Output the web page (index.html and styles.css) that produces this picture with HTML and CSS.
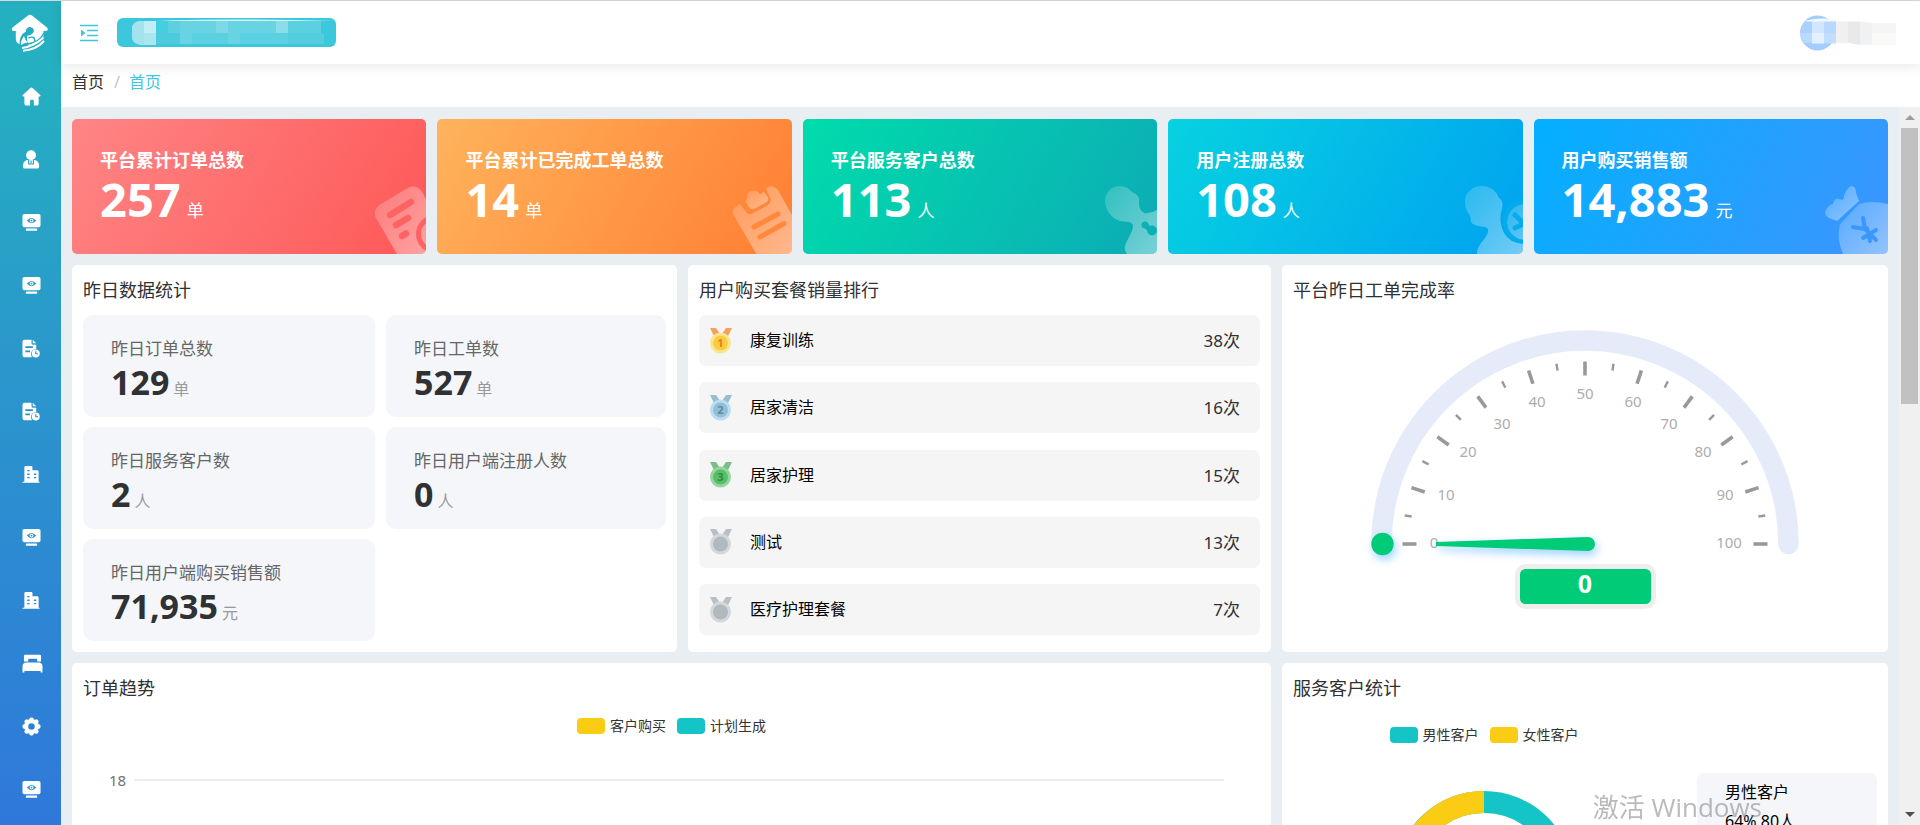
FILE: index.html
```html
<!DOCTYPE html>
<html lang="zh-CN">
<head>
<meta charset="utf-8">
<title>首页</title>
<link rel="stylesheet" href="styles.css">
</head>
<body>
<svg class="sprite" aria-hidden="true">
  <symbol id="i-home" viewBox="0 0 20 20"><path fill="#fff" d="M8.800 1q1.200-1 2.400 0l8 7.400q1 1.300-.7 1.600H17.500v7.500q0 2-2 2H12.500v-4.500q0-1.500-1.500-1.500h-1q-1.500 0-1.500 1.500v4.500H4.500q-2 0-2-2V10H1.500Q-.2 9.700.8 8.400z"/></symbol>
  <symbol id="i-user" viewBox="0 0 20 20"><circle cx="9.500" cy="5.500" r="5.200" fill="#fff"/><path fill="#fff" d="M5 10.500h9q4 1.500 4 6v1q0 2-2 2H3q-2 0-2-2v-1q0-4.500 4-6z"/><path d="M7 10.200v4.500h5v-4.500M9.500 11v3" fill="none" stroke="#289fc8" stroke-width="1.200"/></symbol>
  <symbol id="i-screen" viewBox="0 0 20 20"><rect x=".5" y="1" width="19" height="14" rx="2" fill="#fff"/><rect x="4" y="16.200" width="12" height="2.600" rx="1" fill="#fff"/><path d="M5 8q5-5.500 10 0q-5 5.500-10 0z" fill="#2a98cc"/><circle cx="10" cy="8" r="2" fill="#fff"/><circle cx="10" cy="8" r="1" fill="#2a98cc"/></symbol>
  <symbol id="i-file" viewBox="0 0 20 20"><path fill="#fff" d="M2.500.8H10v3.700q0 1.500 1.500 1.500H15v4.500q-5 .3-5.500 5 0 2 1 3.700h-8q-2 0-2-2V2.800q0-2 2-2zM11.300.8l3.700 3.700h-3.700z"/><path d="M3.500 8.500h8M3.500 13h5" stroke="#2994cc" stroke-width="1.700"/><circle cx="14.500" cy="15.200" r="4.200" fill="#fff"/><path d="M14.500 13v2.500h2.300" fill="none" stroke="#2994cc" stroke-width="1.200"/></symbol>
  <symbol id="i-building" viewBox="0 0 20 20"><path fill="#fff" d="M2.500 17.500V2.500q0-1.500 1.500-1.500h6q1 0 1 1v3.500h5q1.500 0 1.500 1.500v10.500h1v1.300H.5v-1.300z"/><path d="M5.500 6h2.500M5.500 9.700h2.500M5.500 13.300h2.500M12.500 9.700h2.500M12.500 13.300h2.500" stroke="#2c8bd0" stroke-width="1.400"/></symbol>
  <symbol id="i-bed" viewBox="0 0 22 20"><path fill="#fff" d="M2 8V2.200Q2 .8 3.400.8h15.200q1.400 0 1.400 1.400V8h-4V6q0-1-1-1H7.500q-1 0-1 1v2zM4 9h14q3.500.5 3.500 4v6.500h-2V18H2.500v1.500h-2V13Q.5 9.500 4 9z"/></symbol>
  <symbol id="i-gear" viewBox="0 0 20 20"><g fill="#fff"><circle cx="10" cy="10" r="7.800"/><rect x="7.700" y=".5" width="4.600" height="19" rx="1.800"/><rect x=".5" y="7.700" width="19" height="4.600" rx="1.800"/><rect x="7.700" y=".5" width="4.600" height="19" rx="1.800" transform="rotate(45 10 10)"/><rect x="7.700" y=".5" width="4.600" height="19" rx="1.800" transform="rotate(-45 10 10)"/></g><circle cx="10" cy="10" r="3.400" fill="#2e80d6"/></symbol>
</svg>

<div class="app">
  <nav class="sidebar" aria-label="主导航">
    <a class="logo" href="#" aria-label="首页">
      <svg width="38" height="38" viewBox="0 0 38 38"><path fill="#fff" d="M17 1.600q2-1.600 4 0L36 13.500q2 3-1 3.500h-2.500v5q-2 7-12 9L9 30.500Q5 29 4.800 25V17H2.500q-3-.5-1-3.500z"/><path fill="#25adc1" d="M8.500 31Q8 21 15 17.500a4 3.600 0 1 1 7 1.500Q19 22 16.500 21.500 15 26 18 30q-4 2-6 3.500z"/><path fill="#fff" d="M13 22q-3.500 5-3 9 3-2.500 7-2.500-3-2-4-6.500z"/><path fill="none" stroke="#25adc1" stroke-width="1.400" d="M17.500 24q3-1.500 5.500-.5l1 4.500M33 19q-5 10-17 11"/><path fill="none" stroke="#fff" stroke-width="1.900" d="M11 34Q24 32 32.500 23.500M12 36.700Q25 36 33 27"/></svg>
    </a>
    <a class="nav-item" href="#" aria-label="主页"><svg class="nav-icon"><use href="#i-home"/></svg></a>
    <a class="nav-item" href="#" aria-label="用户"><svg class="nav-icon"><use href="#i-user"/></svg></a>
    <a class="nav-item" href="#" aria-label="监控"><svg class="nav-icon"><use href="#i-screen"/></svg></a>
    <a class="nav-item" href="#" aria-label="监控"><svg class="nav-icon"><use href="#i-screen"/></svg></a>
    <a class="nav-item" href="#" aria-label="订单"><svg class="nav-icon"><use href="#i-file"/></svg></a>
    <a class="nav-item" href="#" aria-label="工单"><svg class="nav-icon"><use href="#i-file"/></svg></a>
    <a class="nav-item" href="#" aria-label="机构"><svg class="nav-icon"><use href="#i-building"/></svg></a>
    <a class="nav-item" href="#" aria-label="监控"><svg class="nav-icon"><use href="#i-screen"/></svg></a>
    <a class="nav-item" href="#" aria-label="机构"><svg class="nav-icon"><use href="#i-building"/></svg></a>
    <a class="nav-item" href="#" aria-label="床位"><svg class="nav-icon nav-icon-wide"><use href="#i-bed"/></svg></a>
    <a class="nav-item" href="#" aria-label="设置"><svg class="nav-icon"><use href="#i-gear"/></svg></a>
    <a class="nav-item" href="#" aria-label="监控"><svg class="nav-icon"><use href="#i-screen"/></svg></a>
  </nav>

  <div class="main">
    <header class="header">
      <button class="fold" type="button" aria-label="展开菜单">
        <svg width="18" height="18" viewBox="0 0 18 18"><path d="M0 1.500h18M7 6.500h11M7 11.500h11M0 16.500h18" stroke="#3cc8dc" stroke-width="1.600"/><path d="M1 5.500v7L5.500 9z" fill="#3cc8dc"/></svg>
      </button>
      <button class="org" type="button" aria-label="机构">
        <svg width="219" height="29" viewBox="0 0 219 29">
          <rect x="27" y="3" width="177" height="23" fill="#5ad0e0"/>
          <path d="M39 3q60-3 180 0z" fill="#d7f3f8"/>
          <path d="M15 8q3-5 8-5h4v24h-4q-8-2-8-7z" fill="#a4e3ee"/><rect x="27" y="3" width="12" height="12" fill="#c2eff6"/><rect x="27" y="15" width="12" height="12" fill="#abe5ef"/>
          <rect x="39" y="3" width="12" height="12" fill="#47cde0"/><rect x="39" y="15" width="24" height="11" fill="#4bcbdd"/>
          <g fill="#68d4e3"><rect x="63" y="3" width="36" height="12"/><rect x="63" y="15" width="12" height="11"/><rect x="111" y="3" width="48" height="12"/><rect x="111" y="15" width="12" height="11"/></g>
          <rect x="99" y="3" width="12" height="12" fill="#7bdae6"/><rect x="159" y="3" width="12" height="12" fill="#8adeea"/><rect x="171" y="15" width="36" height="11" fill="#53ccdd"/>
        </svg>
      </button>
      <button class="account" type="button" aria-label="账户">
        <svg width="98" height="36" viewBox="0 0 98 36">
          <circle cx="17.500" cy="18" r="17.500" fill="#a3cdff"/>
          <path d="M6 5.500Q22 2 36 5v2H6z" fill="#f3f8fd"/>
          <path d="M1 14q1-5 4-7.500h7V18H0z" fill="#abd2ff"/><path d="M0 18h12v10H4q-3-4-4-10z" fill="#b9daff"/>
          <rect x="12" y="6.500" width="12" height="11.500" fill="#d2e6ff"/><rect x="12" y="18" width="12" height="10.500" fill="#e5f0ff"/>
          <rect x="24" y="6.500" width="12" height="11.500" fill="#b7d8ff"/><rect x="24" y="18" width="12" height="10.500" fill="#c2deff"/>
          <rect x="36" y="6.500" width="12" height="21.500" fill="#f0f0f0"/><path d="M48 6.500h12V30l-12-2z" fill="#e9e9e9"/>
          <path d="M60 6.500l12 1.500v22H60z" fill="#f0f1f3"/><path d="M72 8h24v10H72z" fill="#f4f5f5"/><path d="M72 18h24v12H72z" fill="#f9f9f8"/>
        </svg>
      </button>
    </header>

    <nav class="crumbs" aria-label="面包屑">
      <a class="crumb" href="#">首页</a><span class="crumb-sep">/</span><a class="crumb crumb-on" href="#">首页</a>
    </nav>

    <div class="viewport">
      <main class="content">
        <section class="totals">
          <article class="total total-red">
            <h2 class="total-name">平台累计订单总数</h2>
            <p class="total-row"><strong class="total-num">257</strong> <span class="total-unit">单</span></p>
            <svg class="total-art" width="54" height="68" viewBox="0 0 54 68"><defs><linearGradient id="fade" x1="0" y1="0" x2="1" y2="1"><stop offset="0" stop-color="#fff" stop-opacity=".16"/><stop offset="1" stop-color="#fff" stop-opacity=".45"/></linearGradient></defs><path fill="url(#fade)" d="M3.500 31Q1 23 8 18.500L34 3q10-6 16 3l4 7v55H25z"/><g fill="none" stroke="#fd6363" stroke-linecap="round" stroke-width="6.500"><path d="M18 29l21-13M24 39l12-7M30 50l4-2.500"/><circle cx="63" cy="48" r="16.500" stroke-width="5"/></g></svg>
          </article>
          <article class="total total-orange">
            <h2 class="total-name">平台累计已完成工单总数</h2>
            <p class="total-row"><strong class="total-num">14</strong> <span class="total-unit">单</span></p>
            <svg class="total-art" width="60" height="68" viewBox="0 0 60 68"><path fill="url(#fade)" d="M1.500 29Q-.5 23 5 20l3-2 6 8q3 4 7 1l15-8q4-3 2-7l-4-10q7-4 12 2l14 25v40H25z"/><path fill="url(#fade)" d="M13.500 15.500l2-4Q14 6 20 5q6-1.500 8 3.500l4-3 4 6q1 3-2 5l-11 6q-4 2-6-1z"/><path d="M22 41l24-13M28 51l24-13.500" stroke="#ff883b" stroke-width="5" stroke-linecap="round"/></svg>
          </article>
          <article class="total total-green">
            <h2 class="total-name">平台服务客户总数</h2>
            <p class="total-row"><strong class="total-num">113</strong> <span class="total-unit">人</span></p>
            <svg class="total-art" width="54" height="68" viewBox="0 0 54 68"><path fill="url(#fade)" d="M2 15C2 6 9 0 17 0q7 0 12 6 8 3 7 10t5 11q6 1 13-3v44H24q-4-5-1-11l6-12q3-8-3-9l-9-1C10 33 2 25 2 15z"/><path d="M42 39l7 6" stroke="#0ab2b3" stroke-width="5"/><circle cx="42" cy="39" r="3.500" fill="#0ab2b3"/><circle cx="49" cy="44.500" r="5" fill="#0ab2b3"/></svg>
          </article>
          <article class="total total-cyan">
            <h2 class="total-name">用户注册总数</h2>
            <p class="total-row"><strong class="total-num">108</strong> <span class="total-unit">人</span></p>
            <svg class="total-art" width="58" height="68" viewBox="0 0 58 68"><path fill="url(#fade)" d="M0 15C0 6 8 0 17 0q12 0 17 12 5 3 3 10-4 14 2 25 7 11 19 10v11H12q0-6 4-11 12-14 4-16-12-1-14-5 0-6-4-11-2-4-2-10z"/><circle cx="60" cy="36" r="18" fill="url(#fade)"/><circle cx="60" cy="36" r="20" fill="none" stroke="#04adea" stroke-width="4"/><path d="M50 29l8 8M50 42l8-4" stroke="#04adea" stroke-width="5" stroke-linecap="round"/></svg>
          </article>
          <article class="total total-blue">
            <h2 class="total-name">用户购买销售额</h2>
            <p class="total-row"><strong class="total-num">14,883</strong> <span class="total-unit">元</span></p>
            <svg class="total-art" width="63" height="68" viewBox="0 0 63 68"><path fill="url(#fade)" d="M12 35l-8-3Q-1 29 .5 25 3 19 8 18q1-6 6-5l4 1Q20 3 26 0q5 0 5 7l3 8z"/><path fill="url(#fade)" d="M34 18q14-4 29 0v50H18Q11 52 15 38z"/><path d="M38 32l2 11M28 41l12 2 11 11M38 52l13-8M45 55l-3-13" stroke="#3a97ff" stroke-width="4" stroke-linecap="round" fill="none"/></svg>
          </article>
        </section>

        <section class="row row-three">
          <div class="panel">
            <h3 class="panel-title">昨日数据统计</h3>
            <div class="stats">
              <div class="stat"><p class="stat-name">昨日订单总数</p><p class="stat-row"><strong class="stat-num">129</strong> <span class="stat-unit">单</span></p></div>
              <div class="stat"><p class="stat-name">昨日工单数</p><p class="stat-row"><strong class="stat-num">527</strong> <span class="stat-unit">单</span></p></div>
              <div class="stat"><p class="stat-name">昨日服务客户数</p><p class="stat-row"><strong class="stat-num">2</strong> <span class="stat-unit">人</span></p></div>
              <div class="stat"><p class="stat-name">昨日用户端注册人数</p><p class="stat-row"><strong class="stat-num">0</strong> <span class="stat-unit">人</span></p></div>
              <div class="stat"><p class="stat-name">昨日用户端购买销售额</p><p class="stat-row"><strong class="stat-num">71,935</strong> <span class="stat-unit">元</span></p></div>
            </div>
          </div>

          <div class="panel">
            <h3 class="panel-title">用户购买套餐销量排行</h3>
            <ol class="ranks">
              <li class="rank"><svg class="medal" viewBox="0 0 22 26"><path d="M0 0h6l4 6-5 4zM22 0h-6l-4 6 5 4z" fill="#f4a15f"/><circle cx="10.500" cy="15" r="10.500" fill="#fae591"/><circle cx="10.500" cy="15" r="7.500" fill="#f9cd3d"/><text class="medal-num" x="10.500" y="19" fill="#e87a2c">1</text></svg><span class="rank-name">康复训练</span><span class="rank-count">38次</span></li>
              <li class="rank"><svg class="medal" viewBox="0 0 22 26"><path d="M0 0h6l4 6-5 4zM22 0h-6l-4 6 5 4z" fill="#96bdd2"/><circle cx="10.500" cy="15" r="10.500" fill="#bcdcf0"/><circle cx="10.500" cy="15" r="7.500" fill="#91bfd6"/><text class="medal-num" x="10.500" y="19" fill="#5d8ba3">2</text></svg><span class="rank-name">居家清洁</span><span class="rank-count">16次</span></li>
              <li class="rank"><svg class="medal" viewBox="0 0 22 26"><path d="M0 0h6l4 6-5 4zM22 0h-6l-4 6 5 4z" fill="#7cbd8a"/><circle cx="10.500" cy="15" r="10.500" fill="#92d69e"/><circle cx="10.500" cy="15" r="7.500" fill="#58bd68"/><text class="medal-num" x="10.500" y="19" fill="#2c8c40">3</text></svg><span class="rank-name">居家护理</span><span class="rank-count">15次</span></li>
              <li class="rank"><svg class="medal" viewBox="0 0 22 26"><path d="M0 0h6l4 6-5 4zM22 0h-6l-4 6 5 4z" fill="#b9bfc4"/><circle cx="10.500" cy="15" r="10.500" fill="#d3d8dc"/><circle cx="10.500" cy="15" r="7.500" fill="#b1b8be"/></svg><span class="rank-name">测试</span><span class="rank-count">13次</span></li>
              <li class="rank"><svg class="medal" viewBox="0 0 22 26"><path d="M0 0h6l4 6-5 4zM22 0h-6l-4 6 5 4z" fill="#b9bfc4"/><circle cx="10.500" cy="15" r="10.500" fill="#d3d8dc"/><circle cx="10.500" cy="15" r="7.500" fill="#b1b8be"/></svg><span class="rank-name">医疗护理套餐</span><span class="rank-count">7次</span></li>
            </ol>
          </div>

          <div class="panel">
            <h3 class="panel-title">平台昨日工单完成率</h3>
            <svg class="gauge" width="490" height="300" viewBox="0 15 490 300" role="img" aria-label="完成率 0">
              <defs><filter id="glow" x="-40%" y="-150%" width="180%" height="400%"><feDropShadow dx="2" dy="4" stdDeviation="5" flood-color="#008aff" flood-opacity=".4"/></filter></defs>
              <path d="M41.500 244a203.500 203.500 0 0 1 407 0" fill="none" stroke="#e5ebf8" stroke-width="20.500" stroke-linecap="round"/>
              <g stroke="#999" stroke-width="3.600">
                <path id="tick" d="M62.500 244h14"/>
                <use href="#tick" transform="rotate(18 245 244)"/><use href="#tick" transform="rotate(36 245 244)"/><use href="#tick" transform="rotate(54 245 244)"/><use href="#tick" transform="rotate(72 245 244)"/><use href="#tick" transform="rotate(90 245 244)"/><use href="#tick" transform="rotate(108 245 244)"/><use href="#tick" transform="rotate(126 245 244)"/><use href="#tick" transform="rotate(144 245 244)"/><use href="#tick" transform="rotate(162 245 244)"/><use href="#tick" transform="rotate(180 245 244)"/>
              </g>
              <g stroke="#999" stroke-width="2.400">
                <path id="minor" d="M62.500 244h7" transform="rotate(9 245 244)"/>
                <use href="#minor" transform="rotate(18 245 244)"/><use href="#minor" transform="rotate(36 245 244)"/><use href="#minor" transform="rotate(54 245 244)"/><use href="#minor" transform="rotate(72 245 244)"/><use href="#minor" transform="rotate(90 245 244)"/><use href="#minor" transform="rotate(108 245 244)"/><use href="#minor" transform="rotate(126 245 244)"/><use href="#minor" transform="rotate(144 245 244)"/><use href="#minor" transform="rotate(162 245 244)"/>
              </g>
              <g class="gauge-label">
                <text x="94" y="248">0</text><text x="106" y="200">10</text><text x="128" y="157">20</text><text x="162" y="129">30</text><text x="197" y="107">40</text><text x="245" y="99">50</text><text x="293" y="107">60</text><text x="329" y="129">70</text><text x="363" y="157">80</text><text x="385" y="200">90</text><text x="389" y="248">100</text>
              </g>
              <g fill="#00cb77" filter="url(#glow)"><circle cx="42.500" cy="244" r="11.200"/><path d="M96 242l152-5a7 7 0 0 1 0 14l-152-5z"/></g>
              <rect x="177.500" y="266.500" width="136" height="40" rx="8" fill="#00cb77" stroke="#eee" stroke-width="5"/>
              <text class="gauge-value" x="245" y="293">0</text>
            </svg>
          </div>
        </section>

        <section class="row row-two">
          <div class="panel">
            <h3 class="panel-title">订单趋势</h3>
            <ul class="legend"><li class="key"><i class="swatch swatch-yellow"></i>客户购买</li><li class="key"><i class="swatch swatch-teal"></i>计划生成</li></ul>
            <div class="axis"><span class="axis-label">18</span><span class="axis-line"></span></div>
          </div>
          <div class="panel">
            <h3 class="panel-title">服务客户统计</h3>
            <div class="clients">
              <div class="donut-box">
                <ul class="legend legend-low"><li class="key"><i class="swatch swatch-teal"></i>男性客户</li><li class="key"><i class="swatch swatch-yellow"></i>女性客户</li></ul>
                <svg class="donut" width="180" height="180" viewBox="0 0 180 180" role="img" aria-label="男女客户比例"><circle cx="90" cy="90" r="79" pathLength="100" fill="none" stroke="#14c4c6" stroke-width="22"/><circle cx="90" cy="90" r="79" pathLength="100" fill="none" stroke="#fbcc14" stroke-width="22" stroke-dasharray="36 64" transform="rotate(140.400 90 90)"/></svg>
              </div>
              <div class="client-card"><p class="client-line">男性客户</p><p class="client-line">64% 80人</p></div>
            </div>
          </div>
        </section>
      </main>
      <div class="scrollbar" aria-hidden="true"><span class="arrow arrow-up"></span><span class="thumb"></span><span class="arrow arrow-down"></span></div>
    </div>
  </div>
</div>
<div class="watermark">激活 Windows</div>
</body>
</html>
```

FILE: styles.css
```css
* { box-sizing: border-box; }
body, h2, h3, p, ul, ol { margin: 0; padding: 0; }
ul, ol { list-style: none; }
a { color: inherit; text-decoration: none; }
button { padding: 0; border: 0; background: none; cursor: pointer; }
svg { display: block; }

body {
  overflow: hidden;
  color: #303133;
  font-family: "Noto Sans", "Noto Sans CJK SC", sans-serif;
  font-size: 16px;
}
.sprite { position: absolute; width: 0; height: 0; }
.app { display: flex; height: 100vh; border-top: 1px solid #d9d9d9; }

.sidebar {
  flex: 0 0 61px;
  overflow: hidden;
  background: linear-gradient(#24b0c0 8%, #2a98cb 42%, #2f78da);
}
.logo { display: flex; height: 64px; padding: 13px 0 0 11px; }
.nav-item { display: flex; height: 63px; padding-left: 22px; align-items: center; }
.nav-icon { width: 19px; height: 19px; }
.nav-icon-wide { width: 21px; }

.main { display: flex; flex: 1; flex-direction: column; min-width: 0; }
.header {
  position: relative;
  display: flex;
  flex: none;
  height: 63px;
  padding: 0 22px 0 19px;
  align-items: center;
  background: #fff;
  box-shadow: 0 2px 12px rgba(0, 0, 0, 0.1);
}
.org { margin-left: 19px; overflow: hidden; border-radius: 6px; background: #3cc8dc; }
.account { margin-left: auto; }

.crumbs { display: flex; flex: none; height: 43px; padding: 0 11px; line-height: 36px; background: #fff; }
.crumb-sep { margin: 0 9px 0 10px; color: #c0c4cc; }
.crumb-on { color: #3cc8dc; }

.viewport { display: flex; flex: 1; min-height: 0; background: #e8eef2; }
.content { display: flex; flex: 1; flex-direction: column; gap: 11px; min-width: 0; padding: 12px 11px 0; overflow: hidden; }

.totals { display: grid; grid-template-columns: repeat(5, 1fr); gap: 11px; }
.total { position: relative; overflow: hidden; padding: 27px 28px 30px; border-radius: 5px; color: #fff; }
.total-red { background: linear-gradient(120deg, #ff8585, #fd5857); }
.total-orange { background: linear-gradient(120deg, #ffb35c, #ff7e33); }
.total-green { background: linear-gradient(120deg, #00dcab, #0cabb6); }
.total-cyan { background: linear-gradient(120deg, #07d2e0, #00a2f0); }
.total-blue { background: linear-gradient(120deg, #03b0ff, #3d94ff); }
.total-name { font-size: 18px; line-height: 28px; }
.total-row { display: flex; gap: 6px; align-items: baseline; white-space: nowrap; }
.total-num { font-size: 47px; line-height: 50px; }
.total-unit { font-size: 17px; line-height: 20px; }
.total-art { position: absolute; right: 0; bottom: 0; }

.row { display: grid; gap: 11px; }
.row-three { grid-template-columns: 605fr 583fr 606fr; }
.row-two { flex: 1 0 360px; grid-template-columns: 1199fr 606fr; }
.panel { display: flex; flex-direction: column; min-width: 0; padding: 11px; border-radius: 5px; background: #fff; }
.panel-title { margin-bottom: 11px; font-size: 18px; font-weight: 400; line-height: 28px; }

.stats { display: grid; grid-template-columns: 292fr 280fr; gap: 10px 11px; }
.stat { padding: 21px 28px 15px; border-radius: 10px; background: #f4f6fa; }
.stat-name { color: #666; font-size: 17px; line-height: 26px; }
.stat-row { display: flex; gap: 4px; align-items: baseline; white-space: nowrap; }
.stat-num { font-size: 34px; line-height: 40px; }
.stat-unit { color: #999; font-size: 16px; line-height: 20px; }

.ranks { display: flex; flex: 1; flex-direction: column; justify-content: space-between; padding-bottom: 6px; }
.rank { display: flex; padding: 0 20px 0 11px; align-items: center; border-radius: 7px; line-height: 51px; background: #f5f5f5; }
.medal { width: 22px; height: 26px; }
.medal-num { font-size: 11px; font-weight: 700; text-anchor: middle; }
.rank-name { margin-left: 18px; color: #000; }
.rank-count { margin-left: auto; font-size: 17px; }

.gauge { align-self: center; }
.gauge-label { fill: #adadad; font-size: 15px; text-anchor: middle; }
.gauge-value { fill: #fff; font-size: 25px; font-weight: 700; text-anchor: middle; }

.legend { display: flex; gap: 11px; justify-content: center; padding-top: 3px; color: #333; font-size: 14px; line-height: 20px; }
.legend-low { padding-top: 12px; }
.key { display: flex; gap: 5px; align-items: center; }
.swatch { width: 28px; height: 16px; border-radius: 4px; }
.swatch-yellow { background: #fbcc14; }
.swatch-teal { background: #14c4c6; }

.axis { display: flex; gap: 8px; margin-top: 34px; padding: 0 36px 0 26px; align-items: center; color: #6e7079; font-size: 15px; line-height: 20px; }
.axis-line { flex: 1; height: 2px; background: #e8eef4; }

.clients { display: grid; flex: 1; grid-template-columns: 382fr 180fr; gap: 22px; }
.donut { margin: 46px auto 0; }
.client-card { align-self: start; height: 180px; margin-top: 60px; padding: 5px 28px; border-radius: 7px; background: #f4f6fa; color: #000; }
.client-line { line-height: 29px; }

.scrollbar { display: flex; flex: 0 0 21px; flex-direction: column; align-items: center; background: #f0f0f0; }
.thumb { flex: 0 0 276px; width: 17px; background: #c1c1c1; }
.arrow { display: flex; flex: 0 0 21px; align-items: center; justify-content: center; }
.arrow::after { width: 0; height: 0; border: 5px solid transparent; content: ""; }
.arrow-up::after { border-top: 0; border-bottom-color: #9c9c9c; }
.arrow-down { margin-top: auto; }
.arrow-down::after { border-bottom: 0; border-top-color: #505050; }

.watermark { position: fixed; right: 158px; bottom: 0; color: rgba(130, 130, 130, 0.55); font-family: "Open Sans", "Noto Sans CJK SC", sans-serif; font-size: 26px; line-height: 36px; pointer-events: none; }
```
